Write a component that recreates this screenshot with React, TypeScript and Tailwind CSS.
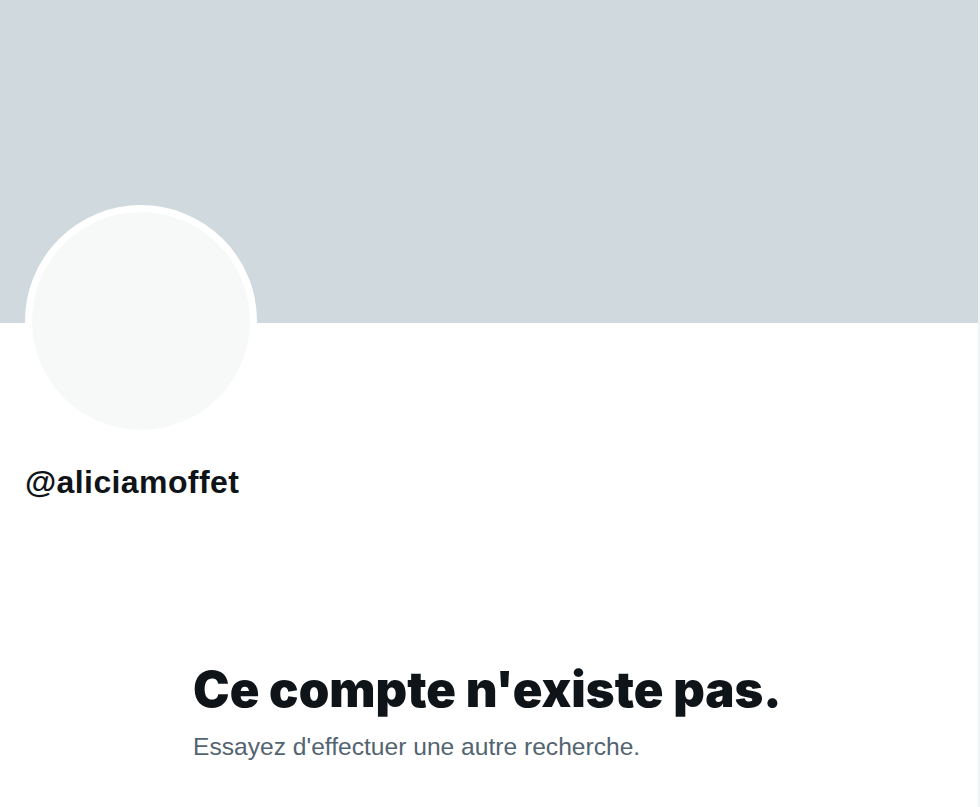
import React from 'react';

const App = () => {
  return (
    <div className="min-h-[807px] w-[980px] bg-white border-r-2 border-[#eff3f4] font-['Liberation_Sans',Arial,sans-serif]">
      {/* Banner */}
      <div className="h-[323px] bg-[#cfd9de]" />

      {/* Avatar + handle */}
      <div className="relative px-[25px]">
        <div className="-mt-[118px] w-[232px] h-[232px] rounded-full border-[7px] border-white bg-[#f7f9f9]" />
        <div className="mt-[27px] text-[32px] leading-[36px] font-bold text-[#0f1419] tracking-[0.4px]">
          @aliciamoffet
        </div>
      </div>

      {/* Empty state */}
      <div className="mx-auto w-[592px] mt-[162px]">
        <h1 className="text-[49px] leading-[56px] font-black text-[#0f1419] font-['Inter',sans-serif] tracking-[0px]">
          Ce compte n'existe pas.
        </h1>
        <p className="mt-[14px] text-[24.6px] leading-[30px] text-[#536471]">
          Essayez d'effectuer une autre recherche.
        </p>
      </div>
    </div>
  );
};

export default App;
